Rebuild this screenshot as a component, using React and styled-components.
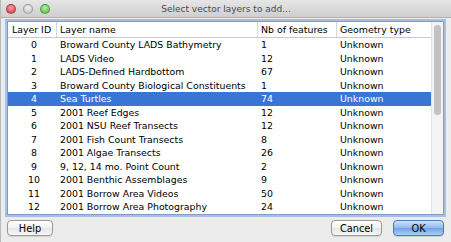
import styled, { createGlobalStyle } from 'styled-components';

const GlobalStyle = createGlobalStyle`
  html, body {
    margin: 0;
    padding: 0;
    background: #ececec;
  }
  body {
    font-family: "DejaVu Sans", "Liberation Sans", sans-serif;
    font-size: 9.4px;
    color: #000;
  }
`;

const rows = [
  ['0', 'Broward County LADS Bathymetry', '1'],
  ['1', 'LADS Video', '12'],
  ['2', 'LADS-Defined Hardbottom', '67'],
  ['3', 'Broward County Biological Constituents', '1'],
  ['4', 'Sea Turtles', '74'],
  ['5', '2001 Reef Edges', '12'],
  ['6', '2001 NSU Reef Transects', '12'],
  ['7', '2001 Fish Count Transects', '8'],
  ['8', '2001 Algae Transects', '26'],
  ['9', '9, 12, 14 mo. Point Count', '2'],
  ['10', '2001 Benthic Assemblages', '9'],
  ['11', '2001 Borrow Area Videos', '50'],
  ['12', '2001 Borrow Area Photography', '24'],
];

const Window = styled.div`
  width: 451px;
  height: 242px;
  box-sizing: border-box;
  display: flex;
  flex-direction: column;
  background: #ececec;
  border-left: 1px solid #b9b9b9;
  overflow: hidden;
`;
const TitleBar = styled.div`
  height: 17px;
  display: flex;
  align-items: center;
  position: relative;
  background: linear-gradient(#e6e6e6, #cfcfcf);
  border-bottom: 1px solid #b0b0b0;
`;
const Lights = styled.div`
  display: flex;
  gap: 7px;
  padding-left: 5px;
`;
const Light = styled.span`
  width: 8px;
  height: 8px;
  border-radius: 50%;
  background: ${p => p.$c};
  border: 0.5px solid rgba(0, 0, 0, 0.25);
`;
const Title = styled.div`
  position: absolute;
  left: 0;
  right: 0;
  text-align: center;
  font-size: 9px;
  color: #4a4a4a;
`;
const Body = styled.div`
  flex: 1;
  display: flex;
  flex-direction: column;
  padding: 3px 7px 0 6px;
`;
const Frame = styled.div`
  height: 192px;
  display: flex;
  border: 1px solid #7d9ccb;
  box-shadow: 0 0 0 2px rgba(140, 178, 226, 0.75);
  background: #fff;
  overflow: hidden;
`;
const Table = styled.div`
  flex: 1;
  display: flex;
  flex-direction: column;
`;
const cols = '49px 201px 79px 1fr';
const Header = styled.div`
  display: grid;
  grid-template-columns: ${cols};
  height: 15px;
  border-bottom: 1px solid #c9c9c9;
  background: #fff;
`;
const HeadCell = styled.div`
  display: flex;
  align-items: center;
  padding-left: ${p => (p.$first ? '4px' : '3px')};
  border-right: 1px solid #d6d6d6;
  white-space: nowrap;
  overflow: hidden;
  &:last-child {
    border-right: none;
  }
`;
const Row = styled.div`
  display: grid;
  grid-template-columns: ${cols};
  height: 13.5px;
  align-items: center;
  background: ${p => (p.$sel ? '#3a74d4' : '#fff')};
  color: ${p => (p.$sel ? '#fff' : '#000')};
`;
const Cell = styled.div`
  padding-left: 3px;
  white-space: nowrap;
  overflow: hidden;
  text-align: ${p => (p.$center ? 'center' : 'left')};
`;
const Scroll = styled.div`
  width: 12px;
  background: #f3f3f3;
  border-left: 1px solid #e3e3e3;
  padding: 3px 2px;
  box-sizing: border-box;
`;
const Thumb = styled.div`
  height: 90px;
  border-radius: 4px;
  background: #c1c1c1;
`;
const Buttons = styled.div`
  display: flex;
  align-items: center;
  margin-top: 5px;
  gap: 11px;
`;
const Button = styled.button`
  width: ${p => p.$w || '51px'};
  height: 16px;
  padding: 0;
  font-family: "DejaVu Sans", sans-serif;
  font-size: 9.8px;
  color: #000;
  border-radius: 4px;
  border: 1px solid ${p => (p.$primary ? '#4e77b6' : '#9b9b9b')};
  background: ${p =>
    p.$primary
      ? 'linear-gradient(#cfe2fb, #8fb8ec 50%, #6fa0e4 51%, #a9d0f8)'
      : 'linear-gradient(#ffffff, #f1f1f1 50%, #e6e6e6 51%, #f6f6f6)'};
  box-shadow: 0 1px 1px rgba(0, 0, 0, 0.12);
`;
const Spacer = styled.div`
  flex: 1;
`;

export default function App() {
  return (
    <>
      <GlobalStyle />
      <Window>
        <TitleBar>
          <Lights>
            <Light $c="radial-gradient(circle at 50% 35%, #f7a0a6, #d4303e)" />
            <Light $c="radial-gradient(circle at 50% 35%, #f2f2f2, #bdbdbd)" />
            <Light $c="radial-gradient(circle at 50% 35%, #b6eea0, #4fb73a)" />
          </Lights>
          <Title>Select vector layers to add...</Title>
        </TitleBar>
        <Body>
          <Frame>
            <Table>
              <Header>
                <HeadCell $first>Layer ID</HeadCell>
                <HeadCell>Layer name</HeadCell>
                <HeadCell>Nb of features</HeadCell>
                <HeadCell>Geometry type</HeadCell>
              </Header>
              {rows.map(r => (
                <Row key={r[0]} $sel={r[0] === '4'}>
                  <Cell $center>{r[0]}</Cell>
                  <Cell>{r[1]}</Cell>
                  <Cell>{r[2]}</Cell>
                  <Cell>Unknown</Cell>
                </Row>
              ))}
            </Table>
            <Scroll>
              <Thumb />
            </Scroll>
          </Frame>
          <Buttons>
            <Button $w="46px">Help</Button>
            <Spacer />
            <Button>Cancel</Button>
            <Button $primary>OK</Button>
          </Buttons>
        </Body>
      </Window>
    </>
  );
}
